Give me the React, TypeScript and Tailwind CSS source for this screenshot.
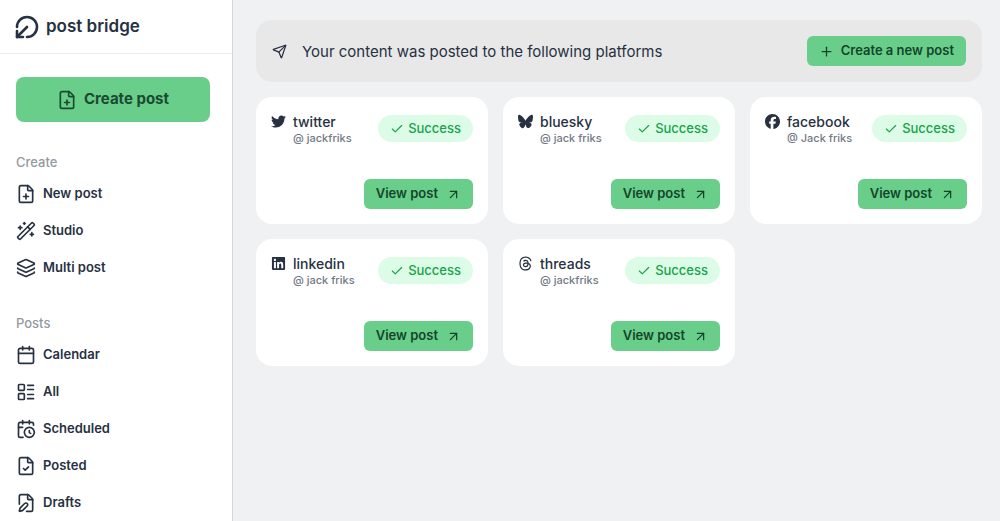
import type { ComponentType } from 'react';
import {
  ArrowUpRight,
  Calendar,
  CalendarClock,
  Check,
  CircleArrowOutDownLeft,
  FileCheck,
  FilePen,
  FilePlus,
  Layers,
  LayoutList,
  Plus,
  Send,
  WandSparkles,
} from 'lucide-react';
import { FaBluesky, FaFacebook, FaLinkedin, FaThreads, FaTwitter } from 'react-icons/fa6';

interface NavItem {
  label: string;
  icon: ComponentType<{ size?: number; strokeWidth?: number }>;
}

interface PostResult {
  platform: string;
  handle: string;
  icon: ComponentType<{ size?: number; className?: string }>;
}

const createItems: NavItem[] = [
  { label: 'New post', icon: FilePlus },
  { label: 'Studio', icon: WandSparkles },
  { label: 'Multi post', icon: Layers },
];

const postItems: NavItem[] = [
  { label: 'Calendar', icon: Calendar },
  { label: 'All', icon: LayoutList },
  { label: 'Scheduled', icon: CalendarClock },
  { label: 'Posted', icon: FileCheck },
  { label: 'Drafts', icon: FilePen },
];

const results: PostResult[] = [
  { platform: 'twitter', handle: 'jackfriks', icon: FaTwitter },
  { platform: 'bluesky', handle: 'jack friks', icon: FaBluesky },
  { platform: 'facebook', handle: 'Jack friks', icon: FaFacebook },
  { platform: 'linkedin', handle: 'jack friks', icon: FaLinkedin },
  { platform: 'threads', handle: 'jackfriks', icon: FaThreads },
];

function NavSection({ title, items }: { title: string; items: NavItem[] }) {
  return (
    <section>
      <h2 className="text-[13px] leading-5 font-medium text-[#949aa2]">{title}</h2>
      <ul className="mt-[3px]">
        {items.map((item) => (
          <li key={item.label}>
            <a href="#" className="flex h-[37px] items-center gap-[7px] text-[13px] font-semibold">
              <item.icon size={20} strokeWidth={2} />
              {item.label}
            </a>
          </li>
        ))}
      </ul>
    </section>
  );
}

function Sidebar() {
  return (
    <aside className="w-[233px] shrink-0 overflow-hidden border-r border-[#d3d7da] bg-white">
      <div className="flex h-[54px] items-center gap-[7px] border-b border-[#e9ebed] px-[15px] text-[17px] font-semibold">
        <CircleArrowOutDownLeft size={24} strokeWidth={2.6} />
        post bridge
      </div>
      <div className="pt-[23px] pr-[22px] pl-4">
        <button className="flex h-[45px] w-full items-center justify-center gap-[7px] rounded-lg bg-[#68ce8a] text-[15px] font-bold text-[#1a4a30]">
          <FilePlus size={20} strokeWidth={2} />
          Create post
        </button>
      </div>
      <nav className="flex flex-col gap-[27px] pt-[30px] pr-[22px] pl-4">
        <NavSection title="Create" items={createItems} />
        <NavSection title="Posts" items={postItems} />
      </nav>
    </aside>
  );
}

function ResultCard({ result }: { result: PostResult }) {
  return (
    <article className="flex h-[127px] flex-col justify-between rounded-2xl bg-white p-[15px]">
      <div className="flex items-start justify-between">
        <div className="flex gap-[7px]">
          <result.icon size={15} className="mt-0.5 shrink-0" />
          <div>
            <h3 className="text-sm leading-5 font-medium">{result.platform}</h3>
            <p className="text-[11px] leading-3 font-medium text-[#727985]">@ {result.handle}</p>
          </div>
        </div>
        <span className="mt-[3px] flex h-[27px] items-center gap-1 rounded-full bg-[#ddfce7] px-3 text-[13px] font-medium text-[#16a34a]">
          <Check size={14} strokeWidth={2} />
          Success
        </span>
      </div>
      <button className="flex h-[30px] items-center gap-2 self-end rounded-md bg-[#68ce8a] px-3 text-[13px] font-semibold text-[#14452a]">
        View post
        <ArrowUpRight size={15} strokeWidth={2} />
      </button>
    </article>
  );
}

export default function App() {
  return (
    <div className="flex h-screen bg-[#eff1f3] font-['Inter',sans-serif] text-[#273142]">
      <Sidebar />
      <main className="flex-1 pt-5 pr-[18px] pl-[23px]">
        <div className="flex items-center rounded-2xl bg-[#e8e8e8] px-4 py-4">
          <Send size={15} strokeWidth={2} />
          <p className="ml-[15px] text-[15px] leading-[29px]">Your content was posted to the following platforms</p>
          <button className="ml-auto flex h-[30px] items-center gap-[7px] rounded-md bg-[#68ce8a] px-3 text-[13px] font-semibold text-[#14452a]">
            <Plus size={15} strokeWidth={2} />
            Create a new post
          </button>
        </div>
        <div className="mt-[15px] grid grid-cols-3 gap-[15px]">
          {results.map((result) => (
            <ResultCard key={result.platform} result={result} />
          ))}
        </div>
      </main>
    </div>
  );
}
